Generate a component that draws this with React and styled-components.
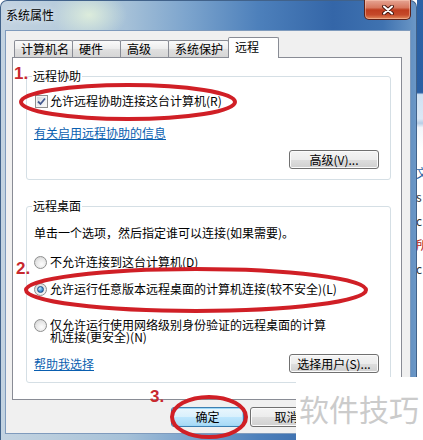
import React from "react";
import styled, { createGlobalStyle } from "styled-components";

const GlobalStyle = createGlobalStyle`
  html, body {
    margin: 0;
    padding: 0;
  }
  body {
    width: 423px;
    height: 440px;
    overflow: hidden;
    background: #fff;
    color: #000;
    font-family: "Noto Sans CJK SC", "Liberation Sans", sans-serif;
    font-size: 12px;
  }
`;

const Screen = styled.div`
  position: relative;
  display: flex;
  width: 423px;
  height: 440px;
  overflow: hidden;
`;

const Frame = styled.div`
  width: 417px;
  height: 440px;
  box-sizing: border-box;
  display: flex;
  flex-direction: column;
  padding: 0 5px 6px 4px;
  border: 1px solid #41628a;
  border-bottom: none;
  border-radius: 7px 7px 0 0;
  background:
    radial-gradient(ellipse 38px 26px at 88px 14px, rgba(225, 240, 220, 0.9), rgba(225, 240, 220, 0) 100%),
    linear-gradient(90deg, #c3d3e1 0%, #b9cddd 12%, #a6c1d8 30%, #7ca4cd 45%, #4d80bb 62%, #3466a8 80%, #3f72b0 92%, #6b97c6 100%);
`;

const TitleBar = styled.div`
  height: 29px;
  display: flex;
  justify-content: space-between;
  align-items: flex-start;
`;

const Title = styled.div`
  padding: 7px 0 0 1px;
  line-height: 14px;
  color: #000;
  text-shadow: 0 0 6px rgba(255, 255, 255, 0.9);
`;

const CloseButton = styled.div`
  width: 47px;
  height: 20px;
  box-sizing: border-box;
  margin-top: -1px;
  display: flex;
  align-items: center;
  justify-content: center;
  border: 1px solid #5b2119;
  border-top: none;
  border-radius: 0 0 5px 5px;
  background: linear-gradient(#e6a594 0%, #d7785f 40%, #bf3d1f 52%, #c5492a 78%, #e28a5c 100%);
  box-shadow: inset 0 0 0 1px rgba(255, 210, 190, 0.45);
`;

const Client = styled.div`
  flex: 1;
  display: flex;
  flex-direction: column;
  padding: 6px 8px 0 6px;
  background: #f0f0f0;
  border: 1px solid #7f9bbd;
`;

const TabRow = styled.div`
  display: flex;
  align-items: flex-end;
  height: 20px;
  padding-left: 2px;
`;

const Tab = styled.div`
  position: relative;
  z-index: ${(p) => (p.$active ? 2 : 1)};
  box-sizing: border-box;
  width: ${(p) => p.$w}px;
  height: ${(p) => (p.$active ? 21 : 17)}px;
  margin-left: -1px;
  margin-bottom: ${(p) => (p.$active ? -1 : 0)}px;
  padding: ${(p) => (p.$active ? "2px 0 0 6px" : "1px 0 0 6px")};
  line-height: 14px;
  border: 1px solid #898c95;
  border-bottom: none;
  border-radius: 2px 2px 0 0;
  background: ${(p) => (p.$active ? "#fff" : "linear-gradient(#fafafa 0%, #ececec 50%, #e0e0e0 51%, #d6d6d6 100%)")};
  &:first-child {
    margin-left: 0;
  }
`;

const Panel = styled.div`
  box-sizing: border-box;
  width: 390px;
  padding: 0 10px 16px 13px;
  background: #fff;
  border: 1px solid #898c95;
`;

const Group = styled.fieldset`
  margin: ${(p) => p.$top}px 0 0 0;
  padding: 0 11px ${(p) => p.$bottom}px 7px;
  min-width: 0;
  border: 1px solid #d5dfe5;
  border-radius: 3px;
`;

const Legend = styled.legend`
  margin-left: -2px;
  padding: 0 1px;
  line-height: 14px;
`;

const OptionRow = styled.div`
  display: flex;
  align-items: ${(p) => (p.$multi ? "flex-start" : "center")};
  height: ${(p) => (p.$multi ? "auto" : "16px")};
  margin-top: ${(p) => p.$top}px;
`;

const CheckBox = styled.span`
  box-sizing: border-box;
  width: 13px;
  height: 13px;
  margin-left: 1px;
  margin-right: 2px;
  display: flex;
  align-items: center;
  justify-content: center;
  border: 1px solid #8e8f8f;
  background: linear-gradient(135deg, #d3d6db 0%, #eef0f2 60%, #fbfbfb 100%);
  box-shadow: inset 0 0 0 1px #f4f4f4;
`;

const Radio = styled.span`
  box-sizing: border-box;
  flex: none;
  width: 13px;
  height: 13px;
  margin-right: 3px;
  border-radius: 50%;
  display: flex;
  align-items: center;
  justify-content: center;
  border: 1px solid #8e8f8f;
  background: radial-gradient(circle at 60% 65%, #fdfdfd 0%, #e6e6e6 55%, #c9c9c9 100%);
  &::after {
    content: "";
    display: ${(p) => (p.$checked ? "block" : "none")};
    width: 7px;
    height: 7px;
    border-radius: 50%;
    box-sizing: border-box;
    border: 1px solid #1e4f86;
    background: radial-gradient(circle at 35% 30%, #c6eafe 0%, #5ba6e0 45%, #1a5a9c 100%);
  }
`;

const OptionLabel = styled.span`
  line-height: ${(p) => (p.$multi ? "12px" : "14px")};
  max-width: ${(p) => (p.$multi ? "280px" : "none")};
`;

const Line = styled.div`
  margin-top: ${(p) => p.$top}px;
  line-height: 14px;
`;

const Link = styled.a`
  color: #0a5fb0;
  text-decoration: underline;
  line-height: 14px;
`;

const ButtonRow = styled.div`
  display: flex;
  align-items: center;
  justify-content: ${(p) => (p.$split ? "space-between" : "flex-end")};
  margin-top: ${(p) => p.$top}px;
`;

const Button = styled.div`
  box-sizing: border-box;
  width: ${(p) => p.$w || 90}px;
  height: ${(p) => p.$h || 19}px;
  display: flex;
  align-items: center;
  justify-content: center;
  line-height: 14px;
  border: 1px solid ${(p) => (p.$default ? "#3c7fb1" : "#707070")};
  border-radius: 3px;
  background: ${(p) =>
    p.$default
      ? "linear-gradient(#eaf6fd 0%, #d9f0fc 50%, #bee6fd 51%, #a7d9f5 100%)"
      : "linear-gradient(#f4f4f4 0%, #ececec 50%, #dedede 51%, #d0d0d0 100%)"};
  box-shadow: inset 0 0 0 1px ${(p) => (p.$default ? "#9fd8f7" : "#fbfbfb")};
`;

const DialogButtons = styled.div`
  display: flex;
  justify-content: flex-end;
  gap: 6px;
  width: 390px;
  margin-top: 7px;
`;

const SideStrip = styled.div`
  width: 6px;
  height: 440px;
  overflow: hidden;
  background: linear-gradient(#2c62a6 0%, #2a5fa3 21%, #cfe1f3 21.5%, #dbe8f5 27%, #b7cde6 28%, #f2f6fb 29%, #ffffff 34%);
`;

const StripText = styled.div`
  margin: 167px 0 0 -1px;
  display: flex;
  flex-direction: column;
  gap: 12px;
  font-size: 12px;
  line-height: 12px;
  color: #333;
`;

const StripGlyph = styled.span`
  color: ${(p) => p.$color || "#333"};
`;

const Overlay = styled.div`
  position: absolute;
  inset: 0;
  pointer-events: none;
  z-index: 5;
`;

const StepNumber = styled.span`
  position: absolute;
  left: ${(p) => p.$x}px;
  top: ${(p) => p.$y}px;
  font-family: "Liberation Sans", Arial, sans-serif;
  font-weight: bold;
  font-size: 17px;
  line-height: 18px;
  color: #c8282e;
`;

const Watermark = styled.div`
  position: absolute;
  left: 296px;
  top: 377px;
  right: 0;
  bottom: 0;
  z-index: 4;
  background: #fff;
  padding: 14px 0 0 3px;
  font-family: "Noto Sans CJK SC", sans-serif;
  font-size: 30px;
  line-height: 34px;
  color: #cbcbcb;
  white-space: nowrap;
`;

const tabs = [
  { label: "计算机名", w: 59 },
  { label: "硬件", w: 49 },
  { label: "高级", w: 49 },
  { label: "系统保护", w: 61 },
  { label: "远程", w: 51, active: true },
];

function CloseIcon() {
  return (
    <svg width="12" height="10" viewBox="0 0 12 10">
      <path d="M2 1.5 L10 8.5 M10 1.5 L2 8.5" stroke="#4a1a12" strokeWidth="4" strokeLinecap="round" />
      <path d="M2 1.5 L10 8.5 M10 1.5 L2 8.5" stroke="#ffffff" strokeWidth="2" strokeLinecap="round" />
    </svg>
  );
}

function CheckMark() {
  return (
    <svg width="9" height="9" viewBox="0 0 9 9">
      <path d="M1 4.5 L3.5 7 L8 1.5" fill="none" stroke="#44598f" strokeWidth="1.8" />
    </svg>
  );
}

function App() {
  return (
    <>
      <GlobalStyle />
      <Screen>
        <Frame>
          <TitleBar>
            <Title>系统属性</Title>
            <CloseButton>
              <CloseIcon />
            </CloseButton>
          </TitleBar>
          <Client>
            <TabRow>
              {tabs.map((t) => (
                <Tab key={t.label} $w={t.w} $active={t.active}>
                  {t.label}
                </Tab>
              ))}
            </TabRow>
            <Panel>
              <Group $top={11} $bottom={10}>
                <Legend>远程协助</Legend>
                <OptionRow $top={10}>
                  <CheckBox>
                    <CheckMark />
                  </CheckBox>
                  <OptionLabel>允许远程协助连接这台计算机(R)</OptionLabel>
                </OptionRow>
                <Line $top={17}>
                  <Link>有关启用远程协助的信息</Link>
                </Line>
                <ButtonRow $top={10}>
                  <Button>高级(V)...</Button>
                </ButtonRow>
              </Group>

              <Group $top={19} $bottom={9}>
                <Legend>远程桌面</Legend>
                <Line $top={13}>单击一个选项，然后指定谁可以连接(如果需要)。</Line>
                <OptionRow $top={14}>
                  <Radio />
                  <OptionLabel>不允许连接到这台计算机(D)</OptionLabel>
                </OptionRow>
                <OptionRow $top={11}>
                  <Radio $checked />
                  <OptionLabel>允许运行任意版本远程桌面的计算机连接(较不安全)(L)</OptionLabel>
                </OptionRow>
                <OptionRow $top={22} $multi>
                  <Radio />
                  <OptionLabel $multi>仅允许运行使用网络级别身份验证的远程桌面的计算机连接(更安全)(N)</OptionLabel>
                </OptionRow>
                <ButtonRow $top={11} $split>
                  <Link>帮助我选择</Link>
                  <Button>选择用户(S)...</Button>
                </ButtonRow>
              </Group>
            </Panel>
            <DialogButtons>
              <Button $w={73} $h={20} $default>确定</Button>
              <Button $w={73} $h={20}>取消</Button>
              <Button $w={73} $h={20} />
            </DialogButtons>
          </Client>
        </Frame>
        <SideStrip>
          <StripText>
            <StripGlyph $color="#2a5fa3">文</StripGlyph>
            <StripGlyph>s</StripGlyph>
            <StripGlyph>c</StripGlyph>
            <StripGlyph $color="#b02020">所</StripGlyph>
            <StripGlyph>c</StripGlyph>
          </StripText>
        </SideStrip>

        <Watermark>软件技巧</Watermark>

        <Overlay>
          <svg width="423" height="440" viewBox="0 0 423 440">
            <g fill="none" stroke="#d01f26" strokeWidth="4">
              <ellipse cx="128" cy="102" rx="107" ry="17" />
              <ellipse cx="196" cy="290" rx="170" ry="21" />
              <ellipse cx="209" cy="417" rx="37" ry="20" />
            </g>
          </svg>
          <StepNumber $x={14} $y={65}>1.</StepNumber>
          <StepNumber $x={16} $y={260}>2.</StepNumber>
          <StepNumber $x={150} $y={388}>3.</StepNumber>
        </Overlay>
      </Screen>
    </>
  );
}

export default App;
